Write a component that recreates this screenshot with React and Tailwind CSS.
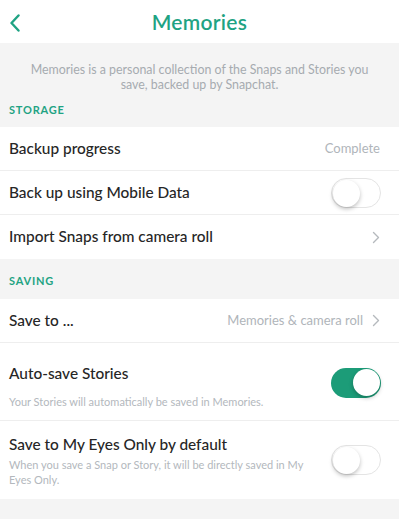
import React from "react";

const font = { fontFamily: "Lato, 'Open Sans', sans-serif" };

function Toggle({ on }) {
  return (
    <div
      className={
        "relative h-[30px] w-[50px] shrink-0 rounded-full " +
        (on ? "bg-[#1c9c78]" : "bg-white border border-[#e4e4e4]")
      }
    >
      <div
        className={
          "absolute top-[1px] h-[27px] w-[27px] rounded-full bg-white shadow-[0_2px_4px_rgba(0,0,0,0.25)] " +
          (on ? "right-[1px]" : "left-[1px]")
        }
      />
    </div>
  );
}

function Chevron() {
  return (
    <svg width="8" height="13" viewBox="0 0 8 13" className="shrink-0">
      <path d="M1.5 1.5 L6.5 6.5 L1.5 11.5" fill="none" stroke="#b5b9bd" strokeWidth="1.4" strokeLinecap="round" strokeLinejoin="round" />
    </svg>
  );
}

function Row({ label, children, border = true }) {
  return (
    <div className={"flex h-[44px] items-center justify-between bg-white pl-[9px] pr-[19px] " + (border ? "border-b border-[#eeeeee]" : "")}>
      <span className="text-[15.4px] font-medium text-[#262626]">{label}</span>
      {children}
    </div>
  );
}

export default function App() {
  return (
    <div className="flex h-[519px] w-[399px] flex-col overflow-hidden bg-[#f4f4f4]" style={font}>
      <div className="relative flex h-[43px] shrink-0 items-center justify-center bg-white">
        <svg width="12" height="18" viewBox="0 0 12 18" className="absolute left-[9px] top-[14px]">
          <path d="M9.5 1.5 L2.5 9 L9.5 16.5" fill="none" stroke="#1fa383" strokeWidth="2.4" strokeLinecap="round" strokeLinejoin="round" />
        </svg>
        <span className="text-[21px] font-semibold tracking-[0.3px] text-[#1fa383]">Memories</span>
      </div>

      <div className="px-[26px] pt-[20px] text-center text-[12.4px] leading-[14.5px] text-[#a6abb0]">
        Memories is a personal collection of the Snaps and Stories you save, backed up by Snapchat.
      </div>
      <div className="pb-[10px] pl-[9px] pt-[11px] text-[11px] font-bold leading-[14px] tracking-[0.8px] text-[#1fa383]">
        STORAGE
      </div>

      <Row label="Backup progress">
        <span className="text-[13px] text-[#b0b5ba]">Complete</span>
      </Row>
      <Row label="Back up using Mobile Data">
        <div className="-mr-[1px]">
          <Toggle on={false} />
        </div>
      </Row>
      <Row label="Import Snaps from camera roll" border={false}>
        <Chevron />
      </Row>

      <div className="pb-[11px] pl-[9px] pt-[15px] text-[11px] font-bold leading-[14px] tracking-[0.8px] text-[#1fa383]">
        SAVING
      </div>

      <Row label="Save to ...">
        <div className="flex items-center gap-[9px]">
          <span className="text-[13px] text-[#b0b5ba]">Memories &amp; camera roll</span>
          <Chevron />
        </div>
      </Row>

      <div className="flex h-[78px] items-start justify-between border-b border-[#eeeeee] bg-white pl-[9px] pr-[18px]">
        <div className="flex flex-col pt-[20px]">
          <span className="text-[15.4px] font-medium leading-[20px] text-[#262626]">Auto-save Stories</span>
          <span className="mt-[12px] text-[11px] leading-[14px] text-[#b3b8bd]">Your Stories will automatically be saved in Memories.</span>
        </div>
        <div className="pt-[25px]">
          <Toggle on={true} />
        </div>
      </div>

      <div className="flex h-[78px] items-start justify-between bg-white pl-[9px] pr-[18px]">
        <div className="flex w-[310px] flex-col pt-[13px]">
          <span className="text-[15.4px] font-medium leading-[20px] text-[#262626]">Save to My Eyes Only by default</span>
          <span className="mt-[4px] text-[11px] leading-[14.5px] text-[#b3b8bd]">
            When you save a Snap or Story, it will be directly saved in My Eyes Only.
          </span>
        </div>
        <div className="pt-[24px]">
          <Toggle on={false} />
        </div>
      </div>
    </div>
  );
}
